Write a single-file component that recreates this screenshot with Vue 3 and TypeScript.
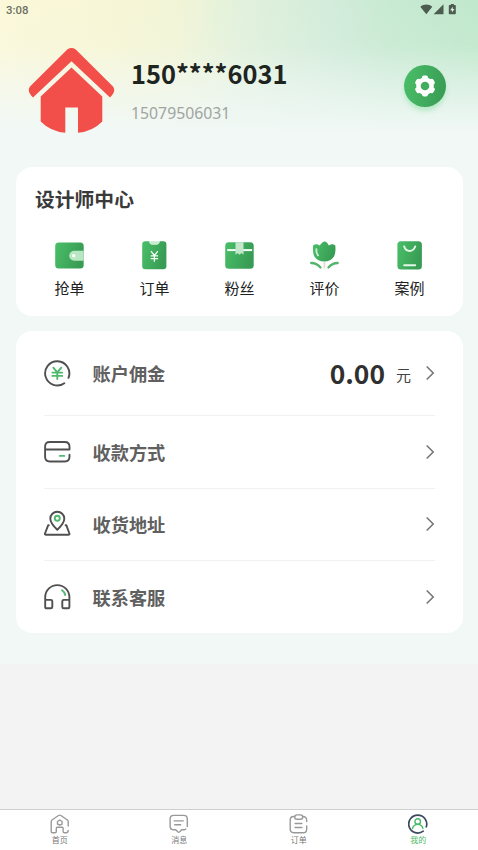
<script setup lang="ts">
interface Entry {
  id: string
  label: string
}

const shortcuts: Entry[] = [
  { id: 'grab', label: '抢单' },
  { id: 'order', label: '订单' },
  { id: 'fans', label: '粉丝' },
  { id: 'review', label: '评价' },
  { id: 'cases', label: '案例' },
]

const rows: Entry[] = [
  { id: 'commission', label: '账户佣金' },
  { id: 'payment', label: '收款方式' },
  { id: 'address', label: '收货地址' },
  { id: 'service', label: '联系客服' },
]

const tabs: Entry[] = [
  { id: 'home', label: '首页' },
  { id: 'message', label: '消息' },
  { id: 'orders', label: '订单' },
  { id: 'mine', label: '我的' },
]

const activeTab = 'mine'
</script>

<template>
  <div class="screen">
    <main class="page">
      <div class="statusbar">
        <span class="time">3:08</span>
        <svg class="status-icons" width="38" height="12" viewBox="0 0.500 38 12">
          <path d="M.3 3.3C3.800 .2 8.800 .2 12.300 3.300L6.300 10.700Z" />
          <path d="M23.500 .8V10.700H13.600Z" />
          <path d="M30.800 .2h3v1.200h1.200q.8 0 .8.800v7.700q0 .8-.8.800h-5.400q-.8 0-.8-.8V2.200q0-.8.800-.8h1.200z" />
          <path class="bolt" d="M32.800 3.200L30.200 6.700h1.700v2.400l2.600-3.600h-1.700z" />
        </svg>
      </div>

      <header class="profile">
        <svg class="avatar" width="87" height="86" viewBox="0 0 87 86">
          <path d="M39.500 1.200Q43.500-1.200 47.500 1.200L85 38.500Q88.500 43.500 82 49.500L43.500 13.300 5 49.500Q-1.500 43.500 2 38.500Z" />
          <path d="M43.500 19.500L74.300 48.500V73.500Q64.500 83.500 50 84.800V59.500H37.300V84.800Q22.500 83.500 12.700 73.500V48.500Z" />
        </svg>
        <div class="identity">
          <div class="nickname">150****6031</div>
          <div class="phone">15079506031</div>
        </div>
        <button class="settings" aria-label="设置">
          <svg width="22" height="22" viewBox="0 0 22 22">
            <g fill="#fff">
              <circle cx="11" cy="11" r="8.800" />
              <rect x="8" y=".6" width="6" height="20.800" rx="1.800" />
              <rect x="8" y=".6" width="6" height="20.800" rx="1.800" transform="rotate(60 11 11)" />
              <rect x="8" y=".6" width="6" height="20.800" rx="1.800" transform="rotate(120 11 11)" />
            </g>
            <circle cx="11" cy="11" r="4.300" fill="#41ad5e" />
          </svg>
        </button>
      </header>

      <section class="card center-card">
        <h2>设计师中心</h2>
        <div class="shortcuts">
          <div v-for="item in shortcuts" :key="item.id" class="shortcut">
            <svg width="30" height="30" viewBox="0.800 -0.500 30 30">
              <defs>
                <linearGradient :id="'fill-' + item.id" x1="0" y1="0" x2="1" y2=".3">
                  <stop offset="0" stop-color="#4abf68" />
                  <stop offset="1" stop-color="#389c54" />
                </linearGradient>
              </defs>
              <g v-if="item.id === 'grab'">
                <rect x="1" y="2" width="28.500" height="26" rx="3.500" :fill="`url(#fill-${item.id})`" />
                <path d="M29.500 10.300H20a5 5 0 0 0 0 10h9.500z" fill="#b9e6c3" />
                <circle cx="19.500" cy="15.300" r="1.700" fill="#fff" />
              </g>
              <g v-else-if="item.id === 'order'">
                <path d="M6 .8h4q.5 3.200 2.800 3.200h4.800Q20 4 20.400.8h3.800q3 0 3 3v22q0 3-3 3H6q-3 0-3-3v-22q0-3 3-3z" :fill="`url(#fill-${item.id})`" />
                <path d="M10 .8h10.400Q20 4 17.600 4h-4.800Q10.500 4 10 .8z" fill="#c8ebcf" />
                <path d="M11.700 10.700l3.500 4.300 3.500-4.300M11.500 15.300h7.400M11.500 18.200h7.400M15.200 15v6.300" class="white-line thin" />
              </g>
              <g v-else-if="item.id === 'fans'">
                <rect x="1" y="1.800" width="28.500" height="26.500" rx="3.500" :fill="`url(#fill-${item.id})`" />
                <path d="M3 9.600h25" class="white-line thick" />
                <path d="M11.300 1.800h8v12.400l-2-1.700-2 1.700-2-1.700-2 1.700z" fill="#c4e7cb" />
              </g>
              <g v-else-if="item.id === 'review'">
                <path d="M4 4.800q3-2.200 6.500.1Q14 .2 16 1q2 .5 3.700 3.900 3.300-2.200 6.300-.1 1 6.600-1.200 11.200Q21.500 21 15 21T5.200 16Q3 11 4 4.800z" :fill="`url(#fill-${item.id})`" />
                <path d="M7.200 8.800q-.4 3.500 1.600 6" stroke="#c2eacb" stroke-width="2" fill="none" stroke-linecap="round" />
                <path d="M15.200 21.500v6.500" stroke="#ead5ca" stroke-width="1.600" />
                <path d="M2 22.500q5.200-.1 9.300 4.500M28.500 22.500q-5.200-.1-9.300 4.500" stroke="#53b46c" stroke-width="2.300" fill="none" stroke-linecap="round" />
              </g>
              <g v-else>
                <rect x="3.200" y=".8" width="24.500" height="28.300" rx="3.500" :fill="`url(#fill-${item.id})`" />
                <path d="M10 6q1.500 4.500 5.400 4.500T21 6M10 24.700h11" stroke="#e3f6e7" stroke-width="2" fill="none" stroke-linecap="round" />
              </g>
            </svg>
            <span>{{ item.label }}</span>
          </div>
        </div>
      </section>

      <section class="card list-card">
        <div v-for="row in rows" :key="row.id" class="row" :class="row.id">
          <svg class="row-icon" width="28" height="28" viewBox="0.500 0 28 28">
            <g v-if="row.id === 'commission'">
              <path d="M20.800 24.200A12.100 12.100 0 1 1 25 18.800" />
              <path class="accent" d="M9.800 8.700l4 4.700 4-4.700M8.900 13.600h9.800M8.900 16.900h9.800M13.800 13.400v6.700" />
            </g>
            <g v-else-if="row.id === 'payment'">
              <path d="M26 11.500V8.700Q26 4 21.300 4H6.300Q1.600 4 1.600 8.700v10.100q0 4.700 4.700 4.700h15q4.700 0 4.700-4.700v-2M1.600 11.500H26" />
              <path class="accent" d="M16.300 17.900h4.500" />
            </g>
            <g v-else-if="row.id === 'address'">
              <path d="M13.800 19.800Q6.800 13 6.800 8.700a7 7 0 0 1 14 0q0 4.300-7 11.100z" />
              <path d="M5.300 15.300H4.600L1.500 23.500q-.3 1.300 1 1.300h22.400q1.300 0 1-1.300l-3-8.200h-.8" />
              <circle class="accent" cx="13.800" cy="8.200" r="2.500" />
            </g>
            <g v-else>
              <path d="M1.700 24V14.200a12.100 12.100 0 0 1 24.200 0V24q0 1.300-1.300 1.300h-4.300q-1.500 0-1.500-1.300v-5.800q0-1.300 1.500-1.300h5.600M1.700 16.900h5.600q1.500 0 1.500 1.300V24q0 1.300-1.500 1.300H3Q1.700 25.300 1.700 24" />
              <path class="accent" d="M18.500 7.300q2.600 1.500 3.200 4.700" />
            </g>
          </svg>
          <span class="row-label">{{ row.label }}</span>
          <template v-if="row.id === 'commission'">
            <span class="amount">0.00</span>
            <span class="unit">元</span>
          </template>
          <svg class="chevron" width="10" height="16" viewBox="0 0 10 16">
            <path d="M1.700 1.500L8.200 8l-6.500 6.500" />
          </svg>
        </div>
      </section>
    </main>

    <nav class="tabbar">
      <div v-for="tab in tabs" :key="tab.id" class="tab" :class="{ active: tab.id === activeTab }">
        <svg width="20" height="20" viewBox="0.300 0 20 20">
          <g v-if="tab.id === 'home'">
            <path d="M18.500 12V7.600q0-1-.8-1.600L11.200 1.500q-1.200-.8-2.400 0L2.300 6q-.8.600-.8 1.600v9.900q0 1.300 1.300 1.300h2.500q1.300 0 1.300-1.300v-3.200q0-1 1-1h4.800q1 0 1 1v3.200q0 1.300 1.300 1.300h1.500q2.300 0 2.300-2.300" />
            <path d="M10 6L12.300 7.500v2.800L10 11l-2.200-.8V7.500z" />
          </g>
          <g v-else-if="tab.id === 'message'">
            <path d="M18.600 12.500V5q0-3.600-3.600-3.600H5Q1.400 1.400 1.400 5v7q0 3.800 3.600 3.800h2l2 2q1 .8 2 0l2-2h2q1.500 0 2-.7M5.500 6.900h9M6 10.800h6" />
          </g>
          <g v-else-if="tab.id === 'orders'">
            <path d="M6 2.500H5Q1.500 2.500 1.500 6v9q0 3.700 3.500 3.700h9.500q3.500 0 3.500-3.500V12M14 2.500q4 0 4 4v1" />
            <rect x="6" y=".9" width="8" height="4.400" rx="2.200" />
            <path d="M6.400 9.500h6.800M6.400 13.500h6.800" />
          </g>
          <g v-else>
            <path class="ring" d="M15.500 17.200A9 9 0 1 1 18.600 12.800" />
            <circle cx="10" cy="7.500" r="2.800" />
            <path d="M4.800 14.500q1-4.100 5.200-4.100t5.200 4.100" />
          </g>
        </svg>
        <span>{{ tab.label }}</span>
      </div>
    </nav>
  </div>
</template>

<style>
body {
  margin: 0;
}
</style>

<style scoped>
.screen {
  display: flex;
  flex-direction: column;
  justify-content: space-between;
  width: 478px;
  height: 850px;
  background: #f3f3f3;
  font-family: "Noto Sans CJK SC", sans-serif;
  overflow: hidden;
}
.page {
  height: 664px;
  background:
    linear-gradient(180deg, rgba(241, 248, 246, 0) 0, rgba(241, 248, 246, 0.08) 45px, rgba(241, 248, 246, 0.55) 85px, #f1f8f6 132px),
    linear-gradient(90deg, #fbf8da 0, #f7f6d6 110px, #f2f5d7 175px, #e2f1dc 240px, #d3ecdb 330px, #c8ead2 390px, #c0e8cc 478px);
}
.statusbar {
  display: flex;
  justify-content: space-between;
  height: 20px;
  padding: 4px 20px 0 6px;
  box-sizing: border-box;
}
.time {
  font: 500 11.400px/13px Roboto, sans-serif;
  color: #6b7163;
}
.status-icons {
  fill: #4c5c50;
}
.bolt {
  fill: #e0f2e4;
}
.profile {
  display: flex;
  align-items: flex-start;
  height: 147px;
  padding: 27px 32px 0 28px;
  box-sizing: border-box;
}
.avatar {
  margin-top: 1px;
  fill: #f34f4a;
}
.identity {
  flex: 1;
  padding: 9px 0 0 16px;
}
.nickname {
  font-size: 25.400px;
  font-weight: 700;
  line-height: 34px;
  color: #20241f;
}
.phone {
  margin-top: 13px;
  font: 15.800px/20px "Noto Sans", sans-serif;
  color: #a0a5a1;
}
.settings {
  display: grid;
  place-items: center;
  width: 42px;
  height: 42px;
  margin-top: 18px;
  padding: 0;
  border: 0;
  border-radius: 50%;
  background: linear-gradient(100deg, #4abf68, #389a54);
  box-shadow: 0 4px 4px rgba(140, 226, 165, 0.5);
}
.card {
  margin: 0 15px 0 16px;
  border-radius: 16px;
  background: #fff;
}
.center-card {
  height: 149px;
  padding-top: 17px;
  box-sizing: border-box;
}
h2 {
  margin: 0 0 0 19px;
  font-size: 19.800px;
  line-height: 30px;
  font-weight: 700;
  color: #3a3a3a;
}
.shortcuts {
  display: grid;
  grid-template-columns: repeat(5, 85px);
  justify-content: center;
  margin-top: 26px;
}
.shortcut {
  display: flex;
  flex-direction: column;
  align-items: center;
  gap: 7px;
  font-size: 15px;
  line-height: 22px;
  color: #222;
}
.white-line {
  fill: none;
  stroke: #f4fff6;
}
.thin {
  stroke-width: 1.300;
}
.thick {
  stroke-width: 2;
}
.list-card {
  margin-top: 15px;
  padding: 0 28px;
}
.row {
  display: flex;
  align-items: center;
  height: 73px;
  box-sizing: border-box;
  border-bottom: 1px solid #f0f2f1;
}
.row.commission {
  height: 85px;
}
.row.address {
  height: 72px;
  padding-bottom: 1px;
}
.row.service {
  height: 72px;
  border-bottom: 0;
}
.row-icon {
  fill: none;
  stroke: #505050;
  stroke-width: 1.900;
  stroke-linecap: round;
  stroke-linejoin: round;
}
.row-icon .accent {
  stroke: #4fb96d;
}
.row-label {
  flex: 1;
  margin-left: 20.500px;
  padding-bottom: 1px;
  font-size: 18.200px;
  line-height: 28px;
  font-weight: 700;
  color: #606060;
}
.amount {
  font-size: 26.400px;
  line-height: 36px;
  font-weight: 700;
  color: #303030;
}
.unit {
  margin: 3px 14px 0 11px;
  font-size: 15px;
  line-height: 22px;
  color: #444;
}
.chevron {
  fill: none;
  stroke: #777;
  stroke-width: 1.600;
}
.tabbar {
  display: grid;
  grid-template-columns: repeat(4, 1fr);
  height: 41px;
  box-sizing: border-box;
  border-top: 1px solid #cfcfcf;
  background: #fff;
}
.tab {
  display: flex;
  flex-direction: column;
  align-items: center;
  padding-top: 4px;
  font-size: 8px;
  line-height: 12px;
  color: #777;
}
.tab svg {
  fill: none;
  stroke: #999;
  stroke-width: 1.400;
  stroke-linecap: round;
  stroke-linejoin: round;
}
.tab.active {
  color: #4aba68;
}
.tab.active svg {
  stroke: #4aba68;
}
.tab.active .ring {
  stroke: #3c4a5c;
  stroke-width: 1.700;
}
</style>
